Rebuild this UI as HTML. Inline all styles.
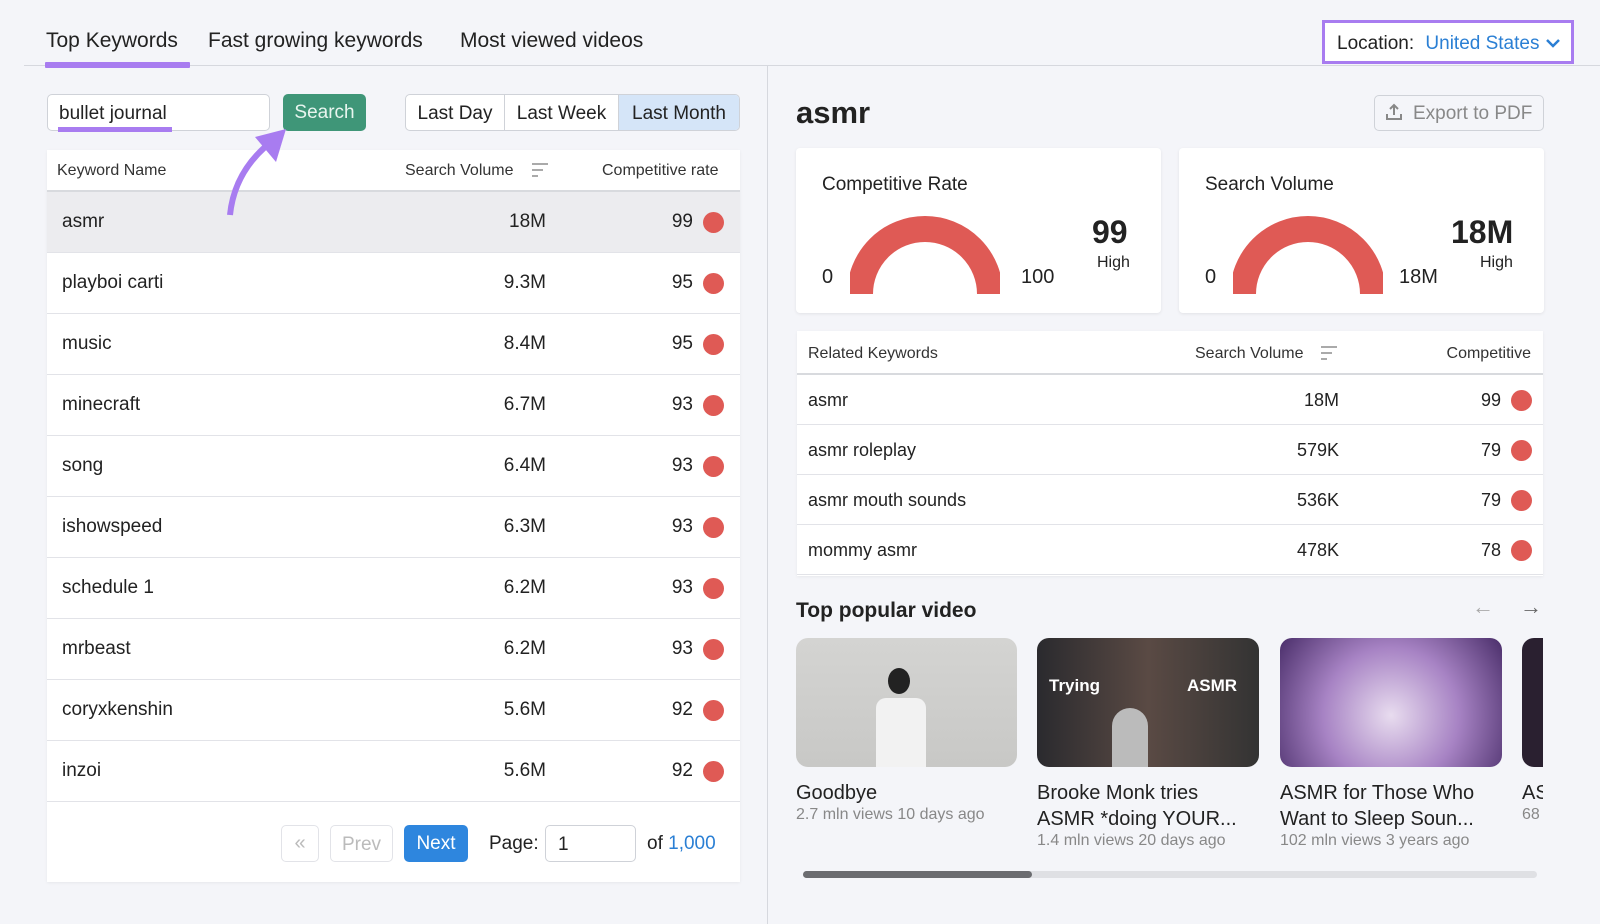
<!DOCTYPE html>
<html><head><meta charset="utf-8"><style>
*{box-sizing:border-box;margin:0;padding:0}
body{width:1600px;height:924px;background:#f4f5f9;font-family:"Liberation Sans",Arial,sans-serif;color:#222;position:relative;overflow:hidden}
.a{position:absolute}
.tab{font-size:21px;color:#222;top:29px}
.row{position:absolute;left:47px;width:693px;height:61px;border-bottom:1px solid #e2e3e8;background:#fff;font-size:19px}
.row span{position:absolute;top:19px}
.dot{position:absolute;width:21px;height:21px;border-radius:50%;background:#df5a55}
.rr{position:absolute;left:797px;width:746px;height:50px;border-bottom:1px solid #e2e3e8;background:#fff;font-size:18px}
.rr span{position:absolute;top:15px}
.card{position:absolute;background:#fff;border-radius:4px;box-shadow:0 1px 3px rgba(0,0,0,.08)}
.thumb{position:absolute;top:638px;height:129px;border-radius:12px;overflow:hidden}
.vt{position:absolute;font-size:20px;line-height:26px;color:#222}
.vs{position:absolute;font-size:16px;color:#888}
</style></head><body>
<div class="a tab" style="left:46px">Top Keywords</div>
<div class="a tab" style="left:208px">Fast growing keywords</div>
<div class="a tab" style="left:460px">Most viewed videos</div>
<div class="a" style="left:24px;top:65px;width:744px;height:1px;background:#d6d8de"></div>
<div class="a" style="left:45px;top:62px;width:145px;height:6px;background:#a87cf0;border-radius:1px"></div>
<div class="a" style="left:767px;top:66px;width:1px;height:858px;background:#d6d8de"></div>
<div class="a" style="left:768px;top:65px;width:832px;height:1px;background:#d6d8de"></div>
<div class="a" style="left:1322px;top:20px;width:252px;height:44px;border:3px solid #a87cf0;background:#fff;font-size:19px;padding:10px 0 0 12px">Location: <span style="color:#2a7fd4;margin-left:6px">United States</span><svg width="16" height="12" style="margin-left:6px" viewBox="0 0 16 12"><path d="M2 3l6 6 6-6" stroke="#2a7fd4" stroke-width="2.5" fill="none"/></svg></div>

<div class="a" style="left:47px;top:94px;width:223px;height:37px;background:#fff;border:1px solid #cfd2d8;border-radius:5px;font-size:19px;padding:8px 0 0 11px">bullet journal</div>
<div class="a" style="left:58px;top:127px;width:114px;height:5px;background:#a87cf0"></div>
<div class="a" style="left:283px;top:94px;width:83px;height:37px;background:#3f9678;border-radius:5px;color:#e8f5ef;font-size:19px;text-align:center;padding-top:8px">Search</div>
<div class="a" style="left:405px;top:94px;width:335px;height:37px;border:1px solid #cfd2d8;border-radius:5px;background:#fff;font-size:19px;display:flex;overflow:hidden">
<div style="width:99px;text-align:center;padding-top:8px;border-right:1px solid #cfd2d8">Last Day</div>
<div style="width:114px;text-align:center;padding-top:8px;border-right:1px solid #cfd2d8">Last Week</div>
<div style="flex:1;text-align:center;padding-top:8px;background:#d5e5f8">Last Month</div></div>

<div class="a" style="left:47px;top:150px;width:693px;height:732px;background:#fff;box-shadow:0 1px 3px rgba(0,0,0,.06)"></div>
<div class="a" style="left:47px;top:150px;width:693px;height:42px;border-bottom:2px solid #d8dade;font-size:16px;color:#333">
<span class="a" style="left:10px;top:12px">Keyword Name</span><span class="a" style="left:358px;top:12px">Search Volume</span>
<svg class="a" style="left:484px;top:12px" width="18" height="16"><path d="M1 2h16M1 8h11M1 14h6" stroke="#aaa" stroke-width="2"/></svg>
<span class="a" style="left:555px;top:12px">Competitive rate</span></div>
<div class="row" style="top:192px;background:#ececef"><span style="left:15px">asmr</span><span style="right:194px">18M</span><span style="right:47px">99</span><div class="dot" style="right:16px;top:20px"></div></div>
<div class="row" style="top:253px"><span style="left:15px">playboi carti</span><span style="right:194px">9.3M</span><span style="right:47px">95</span><div class="dot" style="right:16px;top:20px"></div></div>
<div class="row" style="top:314px"><span style="left:15px">music</span><span style="right:194px">8.4M</span><span style="right:47px">95</span><div class="dot" style="right:16px;top:20px"></div></div>
<div class="row" style="top:375px"><span style="left:15px">minecraft</span><span style="right:194px">6.7M</span><span style="right:47px">93</span><div class="dot" style="right:16px;top:20px"></div></div>
<div class="row" style="top:436px"><span style="left:15px">song</span><span style="right:194px">6.4M</span><span style="right:47px">93</span><div class="dot" style="right:16px;top:20px"></div></div>
<div class="row" style="top:497px"><span style="left:15px">ishowspeed</span><span style="right:194px">6.3M</span><span style="right:47px">93</span><div class="dot" style="right:16px;top:20px"></div></div>
<div class="row" style="top:558px"><span style="left:15px">schedule 1</span><span style="right:194px">6.2M</span><span style="right:47px">93</span><div class="dot" style="right:16px;top:20px"></div></div>
<div class="row" style="top:619px"><span style="left:15px">mrbeast</span><span style="right:194px">6.2M</span><span style="right:47px">93</span><div class="dot" style="right:16px;top:20px"></div></div>
<div class="row" style="top:680px"><span style="left:15px">coryxkenshin</span><span style="right:194px">5.6M</span><span style="right:47px">92</span><div class="dot" style="right:16px;top:20px"></div></div>
<div class="row" style="top:741px"><span style="left:15px">inzoi</span><span style="right:194px">5.6M</span><span style="right:47px">92</span><div class="dot" style="right:16px;top:20px"></div></div>
<div class="a" style="left:281px;top:825px;width:38px;height:37px;border:1px solid #e2e3e8;border-radius:5px;color:#bbb;font-size:20px;text-align:center;padding-top:6px">«</div>
<div class="a" style="left:330px;top:825px;width:63px;height:37px;border:1px solid #e2e3e8;border-radius:5px;color:#bbb;font-size:19px;text-align:center;padding-top:8px">Prev</div>
<div class="a" style="left:404px;top:825px;width:64px;height:37px;background:#2e86de;border-radius:5px;color:#fff;font-size:19px;text-align:center;padding-top:8px">Next</div>
<div class="a" style="left:489px;top:833px;font-size:19px">Page:</div>
<div class="a" style="left:545px;top:825px;width:91px;height:37px;border:1px solid #cfd2d8;border-radius:5px;font-size:19px;padding:8px 0 0 12px">1</div>
<div class="a" style="left:647px;top:833px;font-size:19px">of <span style="color:#2a7fd4">1,000</span></div>

<div class="a" style="left:796px;top:95px;font-size:31px;font-weight:bold">asmr</div>
<div class="a" style="left:1374px;top:95px;width:170px;height:36px;border:1px solid #cfd2d8;border-radius:5px;background:#f4f5f9;color:#888;font-size:19px;padding:7px 0 0 38px">Export to PDF</div>
<svg class="a" style="left:1385px;top:103px" width="18" height="18"><path d="M9 12V2M5 6l4-4 4 4M2 11v5h14v-5" stroke="#888" stroke-width="2" fill="none"/></svg>

<div class="card" style="left:796px;top:148px;width:365px;height:165px">
<div class="a" style="left:26px;top:26px;font-size:19px">Competitive Rate</div>
<svg class="a" style="left:54px;top:68px" width="150" height="80"><path d="M10 78 A65 65 0 0 1 140 78" stroke="#df5a55" stroke-width="26" fill="none"/></svg>
<div class="a" style="left:26px;top:118px;font-size:20px">0</div><div class="a" style="left:225px;top:118px;font-size:20px">100</div>
<div class="a" style="left:296px;top:66px;font-size:32px;font-weight:bold">99</div><div class="a" style="left:301px;top:106px;font-size:16px">High</div></div>
<div class="card" style="left:1179px;top:148px;width:365px;height:165px">
<div class="a" style="left:26px;top:26px;font-size:19px">Search Volume</div>
<svg class="a" style="left:54px;top:68px" width="150" height="80"><path d="M10 78 A65 65 0 0 1 140 78" stroke="#df5a55" stroke-width="26" fill="none"/></svg>
<div class="a" style="left:26px;top:118px;font-size:20px">0</div><div class="a" style="left:220px;top:118px;font-size:20px">18M</div>
<div class="a" style="left:272px;top:66px;font-size:32px;font-weight:bold">18M</div><div class="a" style="left:301px;top:106px;font-size:16px">High</div></div>

<div class="a" style="left:797px;top:331px;width:746px;height:245px;background:#fff;box-shadow:0 1px 3px rgba(0,0,0,.06)"></div>
<div class="a" style="left:797px;top:331px;width:746px;height:44px;border-bottom:2px solid #d8dade;font-size:16px;color:#333">
<span class="a" style="left:11px;top:14px">Related Keywords</span><span class="a" style="left:398px;top:14px">Search Volume</span>
<svg class="a" style="left:523px;top:14px" width="18" height="16"><path d="M1 2h16M1 8h11M1 14h6" stroke="#aaa" stroke-width="2"/></svg>
<span class="a" style="right:12px;top:14px">Competitive</span></div>
<div class="rr" style="top:375px"><span style="left:11px">asmr</span><span style="right:204px">18M</span><span style="right:42px">99</span><div class="dot" style="right:11px;top:15px"></div></div>
<div class="rr" style="top:425px"><span style="left:11px">asmr roleplay</span><span style="right:204px">579K</span><span style="right:42px">79</span><div class="dot" style="right:11px;top:15px"></div></div>
<div class="rr" style="top:475px"><span style="left:11px">asmr mouth sounds</span><span style="right:204px">536K</span><span style="right:42px">79</span><div class="dot" style="right:11px;top:15px"></div></div>
<div class="rr" style="top:525px"><span style="left:11px">mommy asmr</span><span style="right:204px">478K</span><span style="right:42px">78</span><div class="dot" style="right:11px;top:15px"></div></div>

<div class="a" style="left:796px;top:599px;font-size:21px;font-weight:bold">Top popular video</div>
<div class="a" style="left:1472px;top:594px;font-size:22px;color:#aaa">←</div>
<div class="a" style="left:1520px;top:594px;font-size:22px;color:#666">→</div>
<div class="thumb" style="left:796px;width:221px;background:linear-gradient(#d4d4d2,#c8c8c6)"><div class="a" style="left:92px;top:30px;width:22px;height:26px;border-radius:50%;background:#222"></div><div class="a" style="left:80px;top:60px;width:50px;height:69px;background:#f2f2f2;border-radius:10px 10px 0 0"></div></div>
<div class="thumb" style="left:1037px;width:222px;background:linear-gradient(90deg,#2a2a2e,#5a4a44 50%,#333)"><div class="a" style="left:12px;top:38px;color:#fff;font-weight:bold;font-size:17px">Trying</div><div class="a" style="left:150px;top:38px;color:#fff;font-weight:bold;font-size:17px">ASMR</div><div class="a" style="left:75px;top:70px;width:36px;height:59px;background:#bbb;border-radius:18px 18px 0 0"></div></div>
<div class="thumb" style="left:1280px;width:222px;background:radial-gradient(circle at 50% 60%,#e8dcef,#a783c4 50%,#4a2e6a)"></div>
<div class="thumb" style="left:1522px;width:21px;border-radius:12px 0 0 12px;background:#2a2030"></div>
<div class="vt" style="left:796px;top:780px">Goodbye</div>
<div class="vs" style="left:796px;top:806px">2.7 mln views 10 days ago</div>
<div class="vt" style="left:1037px;top:780px">Brooke Monk tries<br>ASMR *doing YOUR...</div>
<div class="vs" style="left:1037px;top:832px">1.4 mln views 20 days ago</div>
<div class="vt" style="left:1280px;top:780px">ASMR for Those Who<br>Want to Sleep Soun...</div>
<div class="vs" style="left:1280px;top:832px">102 mln views 3 years ago</div>
<div class="vt" style="left:1522px;top:780px;width:21px;overflow:hidden">AS</div>
<div class="vs" style="left:1522px;top:806px;width:21px;overflow:hidden">68</div>
<div class="a" style="left:803px;top:871px;width:734px;height:7px;border-radius:4px;background:#dfe0e4"></div>
<div class="a" style="left:803px;top:871px;width:229px;height:7px;border-radius:4px;background:#6b6c70"></div>
<svg class="a" style="left:220px;top:125px;z-index:5" width="75" height="95" viewBox="0 0 75 95"><path d="M10 90 Q14 50 45 22" stroke="#a87cf0" stroke-width="6" fill="none"/><path d="M35 12 L66 4 L56 37 Z" fill="#a87cf0"/></svg>
</body></html>
